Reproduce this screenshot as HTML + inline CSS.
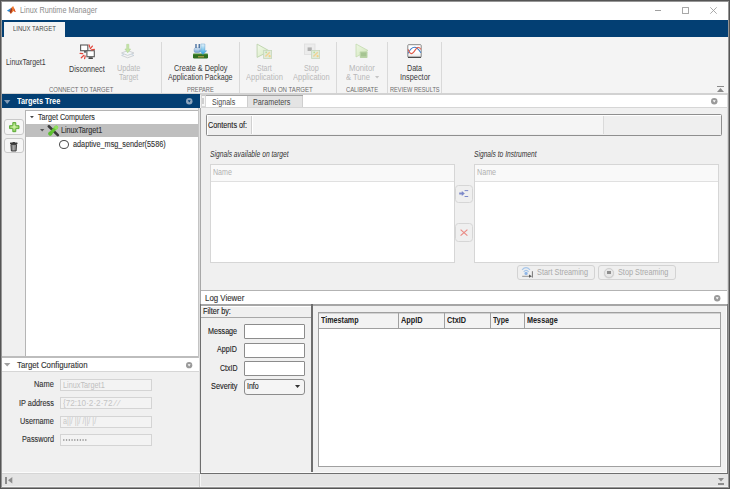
<!DOCTYPE html>
<html><head><meta charset="utf-8">
<style>
*{margin:0;padding:0;box-sizing:border-box}
html,body{width:730px;height:489px;overflow:hidden;background:#f0f0f0}
body{font-family:"Liberation Sans",sans-serif;position:relative}
.a{position:absolute}
svg.a{overflow:visible}
.t{position:absolute;white-space:nowrap;transform-origin:0 0}
</style></head><body>
<div class="a" style="left:0px;top:0px;width:730px;height:20px;background:#fff;"></div>
<svg class="a" style="left:6px;top:5px" width="11" height="10" viewBox="0 0 11 10"><path d="M0.9 5.7 L5.4 2.7 L6 4.6 L3.6 6.9 Z" fill="#2c88d2"/><path d="M5.4 2.7 L7.1 1 L9.7 7 L7.6 6.1 L4.6 9.1 L3.6 6.9 Z" fill="#ee7a2c"/><path d="M5.4 2.7 L6.2 4.4 L5.2 8.4 L3.6 6.9 Z" fill="#9a3420"/><path d="M7.1 1 L9.7 7 L8.3 6.4 L7.6 2.4 Z" fill="#d8432a"/></svg>
<div class="t" style="left:19.90px;top:0.00px;font-size:8.696px;line-height:20px;color:#8c8c8c;transform:scaleX(0.8362);-webkit-text-stroke:0">Linux Runtime Manager</div>
<div class="a" style="left:655px;top:10px;width:6px;height:1px;background:#a0a0a0;"></div>
<div class="a" style="left:682px;top:7px;width:7px;height:7px;border:1px solid #a8a8a8;border-radius:0.5px"></div>
<svg class="a" style="left:710px;top:7px" width="7" height="7" viewBox="0 0 7 7"><path d="M0.3 0.3L6.7 6.7M6.7 0.3L0.3 6.7" stroke="#a0a0a0" stroke-width="0.9"/></svg>
<div class="a" style="left:0px;top:20px;width:730px;height:17px;background:#033f73;"></div>
<div class="a" style="left:4px;top:22px;width:61px;height:15px;background:#f4f4f4;"></div>
<div class="t" style="left:12.80px;top:19.00px;font-size:7.246px;line-height:20px;color:#474747;transform:scaleX(0.8237);-webkit-text-stroke:0.12px #474747;-webkit-text-stroke:0">LINUX TARGET</div>
<div class="a" style="left:0px;top:37px;width:730px;height:56px;background:#f4f4f4;"></div>
<div class="a" style="left:0px;top:93px;width:730px;height:2px;background:#d2d2d2;"></div>
<div class="t" style="left:5.80px;top:52.00px;font-size:8.841px;line-height:20px;color:#3a3a3a;transform:scaleX(0.7843);-webkit-text-stroke:0.12px #3a3a3a;-webkit-text-stroke:0">LinuxTarget1</div>
<svg class="a" style="left:79px;top:44px" width="17" height="16" viewBox="0 0 17 16"><rect x="1.6" y="1" width="7.2" height="5.7" fill="#fff" stroke="#5a5a5a" stroke-width="1.1"/><path d="M5 7.2H7.2V8.6H5Z" fill="#444"/><rect x="7.9" y="6.7" width="7.4" height="6" fill="#fff" stroke="#5a5a5a" stroke-width="1.1"/><path d="M9.8 13.3H13.6L14 15H9.4Z" fill="#444"/><path d="M10.1 0.9L10.7 3.1M13.4 2.1L11.3 4.6M15.4 5.4L12.5 5.8M1.1 9.3L3.7 9.7M2.3 13.8L5 11.3M5.6 14.6L6.2 12.1" stroke="#e2473c" stroke-width="1.25" stroke-linecap="round"/></svg>
<div class="t" style="left:69.30px;top:59.00px;font-size:9.130px;line-height:20px;color:#3a3a3a;transform:scaleX(0.7904);-webkit-text-stroke:0.12px #3a3a3a;-webkit-text-stroke:0">Disconnect</div>
<svg class="a" style="left:120px;top:44px" width="16" height="15" viewBox="0 0 16 15"><path d="M1.5 9 L7.7 6.6 L14 9 L7.7 11.4 Z" fill="#f2f5f8" stroke="#c4c8cc" stroke-width="0.8"/><path d="M1.5 11.4 L7.7 13.8 L14 11.4" fill="none" stroke="#c4c8cc" stroke-width="0.8"/><path d="M4 10.4L1.8 11.3M11.5 10.4L13.7 11.3" stroke="#b8cde0" stroke-width="0.8"/><path d="M6.7 0.3 H8.8 V5 H10.6 L7.75 8.8 L4.9 5 H6.7 Z" fill="#c6e4a8" stroke="#a9d08a" stroke-width="0.5"/></svg>
<div class="t" style="left:116.60px;top:58.00px;font-size:8.300px;line-height:20px;color:#b9b9b9;transform:scaleX(0.8742);">Update</div>
<div class="t" style="left:118.60px;top:67.00px;font-size:8.300px;line-height:20px;color:#b9b9b9;transform:scaleX(0.8367);">Target</div>
<div class="t" style="left:49.00px;top:80.00px;font-size:7.246px;line-height:20px;color:#6c6c6c;transform:scaleX(0.8230);-webkit-text-stroke:0.12px #6c6c6c;-webkit-text-stroke:0">CONNECT TO TARGET</div>
<div class="a" style="left:161px;top:42px;width:1px;height:51px;background:#d9d9d9;"></div>
<svg class="a" style="left:192px;top:43px" width="17" height="17" viewBox="0 0 17 17"><defs><linearGradient id="ag" x1="0" y1="0" x2="0" y2="1"><stop offset="0" stop-color="#e8f4fb"/><stop offset="1" stop-color="#2aa2e0"/></linearGradient><linearGradient id="bg2" x1="0" y1="0" x2="0" y2="1"><stop offset="0" stop-color="#dcecf8"/><stop offset="1" stop-color="#6f9fd0"/></linearGradient></defs><rect x="1" y="10.7" width="15" height="4.8" rx="1.2" fill="#2f6e20"/><rect x="1" y="10.7" width="15" height="0.8" fill="#4f9a38"/><rect x="6" y="13.3" width="6" height="1" fill="#c8a850"/><rect x="2.1" y="4.9" width="6.1" height="4.6" rx="1.5" fill="url(#bg2)" stroke="#5a86b8" stroke-width="0.4"/><path d="M4 1V5M7.2 1V5" stroke="#1d4f8a" stroke-width="1.1"/><path d="M8.8 1 H12.9 V7.8 H14.7 L10.85 11.6 L7.7 7.8 H8.8 Z" fill="url(#ag)" stroke="#4a90c8" stroke-width="0.4"/></svg>
<div class="t" style="left:173.70px;top:58.00px;font-size:8.406px;line-height:20px;color:#3a3a3a;transform:scaleX(0.8675);-webkit-text-stroke:0.12px #3a3a3a;-webkit-text-stroke:0">Create &amp; Deploy</div>
<div class="t" style="left:168.10px;top:67.00px;font-size:8.406px;line-height:20px;color:#3a3a3a;transform:scaleX(0.8494);-webkit-text-stroke:0.12px #3a3a3a;-webkit-text-stroke:0">Application Package</div>
<div class="t" style="left:187.00px;top:80.00px;font-size:7.246px;line-height:20px;color:#6c6c6c;transform:scaleX(0.7831);-webkit-text-stroke:0.12px #6c6c6c;-webkit-text-stroke:0">PREPARE</div>
<div class="a" style="left:239px;top:42px;width:1px;height:51px;background:#d9d9d9;"></div>
<svg class="a" style="left:256px;top:43px" width="17" height="17" viewBox="0 0 17 17"><defs><linearGradient id="tg" x1="0" y1="0" x2="1" y2="1"><stop offset="0" stop-color="#f4faec"/><stop offset="1" stop-color="#d2e8bc"/></linearGradient></defs><path d="M1.1 1.1 L13.5 8 L1.1 14.4 Z" fill="url(#tg)" stroke="#bcd3ac" stroke-width="0.9" stroke-linejoin="round"/><rect x="7.6" y="7.4" width="8" height="8" fill="#e0ebd9" stroke="#c6d6bc" stroke-width="0.8"/><path d="M9.4 13.6 L13.8 9.2" stroke="#f2d294" stroke-width="1.4"/><circle cx="10.2" cy="9.4" r="0.8" fill="#b6de92"/><circle cx="13.6" cy="13.2" r="1.1" fill="#f4d084"/></svg>
<div class="t" style="left:257.10px;top:58.00px;font-size:8.300px;line-height:20px;color:#b9b9b9;transform:scaleX(0.8386);">Start</div>
<div class="t" style="left:246.20px;top:67.00px;font-size:8.300px;line-height:20px;color:#b9b9b9;transform:scaleX(0.9112);">Application</div>
<svg class="a" style="left:304px;top:43px" width="17" height="17" viewBox="0 0 17 17"><rect x="0.5" y="1" width="10.5" height="10.5" fill="#ececec" stroke="#dedede" stroke-width="0.8"/><rect x="3.6" y="4.4" width="4.2" height="3.6" fill="#b0b0b0"/><rect x="7.6" y="7.4" width="8" height="8" fill="#e0ebd9" stroke="#c6d6bc" stroke-width="0.8"/><path d="M9.4 13.6 L13.8 9.2" stroke="#f2d294" stroke-width="1.4"/><circle cx="10.2" cy="9.4" r="0.8" fill="#b6de92"/><circle cx="13.6" cy="13.2" r="1.1" fill="#f4d084"/></svg>
<div class="t" style="left:304.40px;top:58.00px;font-size:8.300px;line-height:20px;color:#b9b9b9;transform:scaleX(0.8669);">Stop</div>
<div class="t" style="left:293.40px;top:67.00px;font-size:8.300px;line-height:20px;color:#b9b9b9;transform:scaleX(0.9039);">Application</div>
<div class="t" style="left:263.00px;top:80.00px;font-size:7.246px;line-height:20px;color:#6c6c6c;transform:scaleX(0.8412);-webkit-text-stroke:0.12px #6c6c6c;-webkit-text-stroke:0">RUN ON TARGET</div>
<div class="a" style="left:336px;top:42px;width:1px;height:51px;background:#d9d9d9;"></div>
<svg class="a" style="left:355px;top:43px" width="15" height="16" viewBox="0 0 15 16"><defs><linearGradient id="mg" x1="0" y1="0" x2="1" y2="1"><stop offset="0" stop-color="#eef7e4"/><stop offset="1" stop-color="#cfe5b8"/></linearGradient></defs><path d="M1 1 L13 7.5 L1 14 Z" fill="url(#mg)" stroke="#c4dab0" stroke-width="0.8" stroke-linejoin="round"/><rect x="4.8" y="8.4" width="7.7" height="6.7" rx="0.8" fill="#b9d3a6"/><rect x="6" y="9.6" width="5.3" height="3.6" fill="#a6c492"/></svg>
<div class="t" style="left:348.90px;top:58.00px;font-size:8.300px;line-height:20px;color:#b9b9b9;transform:scaleX(0.9357);">Monitor</div>
<div class="t" style="left:346.00px;top:67.00px;font-size:8.300px;line-height:20px;color:#b9b9b9;transform:scaleX(0.9087);">&amp; Tune</div>
<svg class="a" style="left:374.5px;top:76.3px" width="4.2" height="2.6" viewBox="0 0 4.2 2.6"><path d="M0 0H4.2L2.1 2.6Z" fill="#c4c4c4"/></svg>
<div class="t" style="left:346.00px;top:80.00px;font-size:7.246px;line-height:20px;color:#6c6c6c;transform:scaleX(0.8079);-webkit-text-stroke:0.12px #6c6c6c;-webkit-text-stroke:0">CALIBRATE</div>
<div class="a" style="left:387px;top:42px;width:1px;height:51px;background:#d9d9d9;"></div>
<svg class="a" style="left:407px;top:43px" width="15" height="16" viewBox="0 0 15 16"><defs><linearGradient id="dg" x1="0" y1="0" x2="0" y2="1"><stop offset="0.6" stop-color="#fff"/><stop offset="1" stop-color="#e4e4e4"/></linearGradient></defs><rect x="0.8" y="1.7" width="13.4" height="12.8" rx="0.8" fill="url(#dg)" stroke="#7a7a7a" stroke-width="0.9"/><path d="M1 14.3H14" stroke="#444" stroke-width="1.2"/><path d="M1.2 10.4 C3 6, 5 4.2, 7.7 4.2 S12 7, 13.8 9.7" fill="none" stroke="#3a7cc8" stroke-width="1.1"/><path d="M1.2 6.4 C2 9, 3 10.6, 4.4 10.6 C7 10.6, 9 4.2, 11 4.2 C12.5 4.2, 13.5 5.5, 13.8 6.4" fill="none" stroke="#e05a48" stroke-width="1.1"/></svg>
<div class="t" style="left:406.90px;top:58.00px;font-size:8.406px;line-height:20px;color:#3a3a3a;transform:scaleX(0.8502);-webkit-text-stroke:0.12px #3a3a3a;-webkit-text-stroke:0">Data</div>
<div class="t" style="left:399.70px;top:67.00px;font-size:8.406px;line-height:20px;color:#3a3a3a;transform:scaleX(0.8735);-webkit-text-stroke:0.12px #3a3a3a;-webkit-text-stroke:0">Inspector</div>
<div class="t" style="left:389.60px;top:80.00px;font-size:7.246px;line-height:20px;color:#6c6c6c;transform:scaleX(0.7829);-webkit-text-stroke:0.12px #6c6c6c;-webkit-text-stroke:0">REVIEW RESULTS</div>
<div class="a" style="left:441px;top:42px;width:1px;height:51px;background:#d9d9d9;"></div>
<div class="a" style="left:717px;top:86px;width:7px;height:1px;background:#8a8a8a;"></div>
<svg class="a" style="left:717px;top:88px" width="7" height="4" viewBox="0 0 7 4"><path d="M0 4H7L3.5 0Z" fill="#8a8a8a"/></svg>
<div class="a" style="left:0px;top:95px;width:200px;height:379px;background:#f0f0f0;"></div>
<div class="a" style="left:2px;top:94px;width:198px;height:14px;background:#033f73;"></div>
<svg class="a" style="left:4.4px;top:99.6px" width="6.4" height="3.9" viewBox="0 0 6.4 3.9"><path d="M0 0H6.4L3.2 3.9Z" fill="#7f9ab6"/></svg>
<div class="t" style="left:17.30px;top:91.00px;font-size:8.406px;line-height:20px;color:#fff;transform:scaleX(0.8771);font-weight:bold;">Targets Tree</div>
<svg class="a" style="left:185.5px;top:98px" width="6.5" height="6.5" viewBox="0 0 6.5 6.5"><circle cx="3.25" cy="3.25" r="3.25" fill="#8ea6be"/><path d="M1.7550000000000001 2.34H4.745L3.25 4.55Z" fill="#033f73"/></svg>
<div class="a" style="left:25px;top:110px;width:174px;height:248px;background:#fff;border:1px solid #b5b5b5"></div>
<svg class="a" style="left:29.9px;top:115.9px" width="3.9" height="2.3" viewBox="0 0 3.9 2.3"><path d="M0 0H3.9L1.95 2.3Z" fill="#444"/></svg>
<div class="t" style="left:38.20px;top:107.00px;font-size:8.300px;line-height:20px;color:#333;transform:scaleX(0.8625);-webkit-text-stroke:0.12px #333;">Target Computers</div>
<div class="a" style="left:26px;top:124px;width:172px;height:13px;background:#bfbfbf;"></div>
<svg class="a" style="left:40.3px;top:129.4px" width="4.4" height="2.4" viewBox="0 0 4.4 2.4"><path d="M0 0H4.4L2.2 2.4Z" fill="#555"/></svg>
<svg class="a" style="left:48px;top:125px" width="11" height="11" viewBox="0 0 11 11"><path d="M0.8 1.3 L9.8 10.1" stroke="#3a3a3a" stroke-width="2.6" stroke-linecap="round"/><path d="M2 8.8 L8.3 2.2" stroke="#62c434" stroke-width="3.2" stroke-linecap="round"/><circle cx="8.2" cy="2.6" r="2.1" fill="#8fdf5e"/><circle cx="2.4" cy="8.6" r="2.1" fill="#5cbf30"/></svg>
<div class="t" style="left:61.20px;top:120.00px;font-size:8.300px;line-height:20px;color:#333;transform:scaleX(0.8669);-webkit-text-stroke:0.12px #333;">LinuxTarget1</div>
<div class="a" style="left:59px;top:140px;width:10px;height:9px;border:1.8px solid #4c4c4c;border-radius:50%"></div>
<div class="t" style="left:72.70px;top:134.00px;font-size:8.300px;line-height:20px;color:#333;transform:scaleX(0.8773);-webkit-text-stroke:0.12px #333;">adaptive_msg_sender(5586)</div>
<div class="a" style="left:4px;top:119px;width:20px;height:16px;background:#f6f6f6;border:1px solid #c9c9c9;border-radius:3px"></div>
<svg class="a" style="left:8.6px;top:122.1px" width="10.6" height="10.3" viewBox="0 0 10.6 10.3"><defs><radialGradient id="pg" cx="0.5" cy="0.45" r="0.6"><stop offset="0" stop-color="#d8f5b0"/><stop offset="1" stop-color="#7cc84a"/></radialGradient></defs><path d="M3.8 0.6H6.8V3.7H10V6.6H6.8V9.7H3.8V6.6H0.6V3.7H3.8Z" fill="url(#pg)" stroke="#55a52e" stroke-width="0.9" stroke-linejoin="round"/></svg>
<div class="a" style="left:4px;top:138px;width:20px;height:15px;background:#f6f6f6;border:1px solid #c9c9c9;border-radius:3px"></div>
<svg class="a" style="left:10px;top:141.5px" width="7.5" height="9.5" viewBox="0 0 7.5 9.5"><rect x="0" y="0.6" width="7.5" height="1.3" rx="0.5" fill="#3a3a3a"/><rect x="2.6" y="0" width="2.3" height="1" fill="#3a3a3a"/><path d="M0.9 2.5H6.6L6.1 9H1.4Z" fill="#8c8c8c" stroke="#333" stroke-width="0.9"/><path d="M3.75 3.5V8.2" stroke="#bdbdbd" stroke-width="0.8"/></svg>
<div class="a" style="left:2px;top:356px;width:198px;height:2px;background:#bdbdbd;"></div>
<div class="a" style="left:2px;top:358px;width:198px;height:14px;background:#fff;border-bottom:1px solid #d6d6d6"></div>
<svg class="a" style="left:4.4px;top:363.3px" width="6.4" height="3.6" viewBox="0 0 6.4 3.6"><path d="M0 0H6.4L3.2 3.6Z" fill="#a0a0a0"/></svg>
<div class="t" style="left:17.10px;top:355.00px;font-size:8.551px;line-height:20px;color:#333;transform:scaleX(0.9169);-webkit-text-stroke:0.12px #333;">Target Configuration</div>
<svg class="a" style="left:185.5px;top:362.2px" width="6.3" height="6.3" viewBox="0 0 6.3 6.3"><circle cx="3.15" cy="3.15" r="3.15" fill="#9a9a9a"/><path d="M1.701 2.268H4.599L3.15 4.409999999999999Z" fill="#fff"/></svg>
<div class="t" style="left:34.00px;top:374.00px;font-size:8.300px;line-height:20px;color:#333;transform:scaleX(0.8941);-webkit-text-stroke:0.12px #333;">Name</div>
<div class="a" style="left:60px;top:379px;width:92px;height:12px;background:#f3f3f3;border:1px solid #d4d4d4"></div>
<div class="t" style="left:18.90px;top:393.00px;font-size:8.300px;line-height:20px;color:#333;transform:scaleX(0.8830);-webkit-text-stroke:0.12px #333;">IP address</div>
<div class="a" style="left:60px;top:397px;width:92px;height:12px;background:#f3f3f3;border:1px solid #d4d4d4"></div>
<div class="t" style="left:20.10px;top:411.00px;font-size:8.300px;line-height:20px;color:#333;transform:scaleX(0.8802);-webkit-text-stroke:0.12px #333;">Username</div>
<div class="a" style="left:60px;top:416px;width:92px;height:12px;background:#f3f3f3;border:1px solid #d4d4d4"></div>
<div class="t" style="left:21.70px;top:429.00px;font-size:8.300px;line-height:20px;color:#333;transform:scaleX(0.8808);-webkit-text-stroke:0.12px #333;">Password</div>
<div class="a" style="left:60px;top:434px;width:92px;height:12px;background:#f3f3f3;border:1px solid #d4d4d4"></div>
<div class="t" style="left:62.80px;top:375.00px;font-size:8.300px;line-height:20px;color:#bfbfbf;transform:scaleX(0.8774);">LinuxTarget1</div>
<div class="t" style="left:62.80px;top:393.00px;font-size:8.300px;line-height:20px;color:#c4c4c4;transform:scaleX(0.9835);">{72:10·2·2·72 ⁄ ⁄</div>
<div class="t" style="left:62.80px;top:411.00px;font-size:8.300px;line-height:20px;color:#c8c8c8;transform:scaleX(0.8701);">a||/ ||/ /||/ |/</div>
<svg class="a" style="left:63px;top:439px" width="24" height="2" viewBox="0 0 24 2"><circle cx="0.80" cy="1" r="0.75" fill="#7a7a7a"/><circle cx="3.55" cy="1" r="0.75" fill="#7a7a7a"/><circle cx="6.30" cy="1" r="0.75" fill="#7a7a7a"/><circle cx="9.05" cy="1" r="0.75" fill="#7a7a7a"/><circle cx="11.80" cy="1" r="0.75" fill="#7a7a7a"/><circle cx="14.55" cy="1" r="0.75" fill="#7a7a7a"/><circle cx="17.30" cy="1" r="0.75" fill="#7a7a7a"/><circle cx="20.05" cy="1" r="0.75" fill="#7a7a7a"/><circle cx="22.80" cy="1" r="0.75" fill="#7a7a7a"/></svg>
<div class="a" style="left:198px;top:108px;width:1px;height:250px;background:#c4c4c4;"></div>
<div class="a" style="left:199px;top:108px;width:1px;height:365px;background:#dedede;"></div>
<div class="a" style="left:200px;top:108px;width:1px;height:365px;background:#a8a8a8;"></div>
<div class="a" style="left:201px;top:95px;width:527px;height:13px;background:#fff;"></div>
<div class="a" style="left:206px;top:95px;width:97px;height:1px;background:#a4a4a4;"></div>
<div class="a" style="left:201px;top:107px;width:527px;height:1px;background:#d6d6d6;"></div>
<div class="a" style="left:201px;top:95px;width:5px;height:12px;background:#f6f6f6;border:1px solid #d8d8d8;border-top-color:#c8c8c8"></div>
<div class="a" style="left:202px;top:98px;width:2px;height:6px;background:#cfcfcf;"></div>
<div class="t" style="left:211.70px;top:92.00px;font-size:8.300px;line-height:20px;color:#4a4a4a;transform:scaleX(0.8522);-webkit-text-stroke:0.12px #4a4a4a;-webkit-text-stroke:0">Signals</div>
<div class="a" style="left:247px;top:96px;width:56px;height:11px;background:#e4e4e4;border-left:1px solid #cfcfcf;border-right:1px solid #cfcfcf"></div>
<div class="t" style="left:252.70px;top:92.00px;font-size:8.300px;line-height:20px;color:#4a4a4a;transform:scaleX(0.8694);-webkit-text-stroke:0.12px #4a4a4a;-webkit-text-stroke:0">Parameters</div>
<svg class="a" style="left:711.4px;top:98.2px" width="6.5" height="6.5" viewBox="0 0 6.5 6.5"><circle cx="3.25" cy="3.25" r="3.25" fill="#9a9a9a"/><path d="M1.7550000000000001 2.34H4.745L3.25 4.55Z" fill="#fff"/></svg>
<div class="a" style="left:201px;top:108px;width:526px;height:182px;background:#f0f0f0;"></div>
<div class="a" style="left:206px;top:114px;width:516px;height:22px;background:#efefef;border:1px solid #8f8f8f;border-radius:1.5px;box-shadow:inset 1px 1px 0 #fff"></div>
<div class="t" style="left:207.90px;top:115.00px;font-size:9.130px;line-height:20px;color:#222;transform:scaleX(0.7942);-webkit-text-stroke:0.12px #222;">Contents of:</div>
<div class="a" style="left:251px;top:116px;width:353px;height:18px;background:#f5f5f5;border-left:1px solid #d0d0d0;border-right:1px solid #dadada;box-shadow:inset 1px 0 0 #fff"></div>
<div class="t" style="left:209.90px;top:144.00px;font-size:8.300px;line-height:20px;color:#333;transform:scaleX(0.8080);font-style:italic;-webkit-text-stroke:0.12px #333;-webkit-text-stroke:0">Signals available on target</div>
<div class="t" style="left:474.30px;top:144.00px;font-size:8.300px;line-height:20px;color:#333;transform:scaleX(0.8037);font-style:italic;-webkit-text-stroke:0.12px #333;-webkit-text-stroke:0">Signals to Instrument</div>
<div class="a" style="left:210px;top:164px;width:245px;height:99px;background:#fff;border:1px solid #d6d6d6"></div>
<div class="a" style="left:211px;top:165px;width:243px;height:17px;background:#f9f9f9;border-bottom:1px solid #e0e0e0"></div>
<div class="t" style="left:212.60px;top:162.00px;font-size:8.300px;line-height:20px;color:#b0b0b0;transform:scaleX(0.8535);">Name</div>
<div class="a" style="left:474px;top:164px;width:245px;height:99px;background:#fff;border:1px solid #d6d6d6"></div>
<div class="a" style="left:475px;top:165px;width:243px;height:17px;background:#f9f9f9;border-bottom:1px solid #e0e0e0"></div>
<div class="t" style="left:476.80px;top:162.00px;font-size:8.300px;line-height:20px;color:#b0b0b0;transform:scaleX(0.8625);">Name</div>
<div class="a" style="left:455px;top:185px;width:18px;height:18px;background:#efefef;border:1px solid #d6d6d6;border-radius:3.5px"></div>
<svg class="a" style="left:458px;top:189px" width="12" height="9" viewBox="0 0 12 9"><path d="M1.2 4.5H4.5" stroke="#7d89c9" stroke-width="2"/><path d="M3.8 2L6.8 4.5L3.8 7Z" fill="#7d89c9"/><path d="M6.6 1.6H10.2M6.6 7.5H10.2" stroke="#7d89c9" stroke-width="1"/></svg>
<div class="a" style="left:455px;top:223px;width:18px;height:19px;background:#efefef;border:1px solid #d6d6d6;border-radius:3.5px"></div>
<svg class="a" style="left:459.8px;top:228.8px" width="8" height="7.2" viewBox="0 0 8 7.2"><path d="M0.6 0.6L7.4 6.6M7.4 0.6L0.6 6.6" stroke="#ea8a84" stroke-width="1.2"/></svg>
<div class="a" style="left:517px;top:265px;width:78px;height:15px;background:#efefef;border:1px solid #d3d3d3;border-radius:3px"></div>
<svg class="a" style="left:521px;top:266px" width="13" height="12" viewBox="0 0 13 12"><path d="M1.1 3.8 Q5 -0.6 9 3.8" stroke="#a6c6ea" stroke-width="1.2" fill="none"/><path d="M2.7 5.8 Q5.1 2.9 7.6 5.8" stroke="#a6c6ea" stroke-width="1.1" fill="none"/><circle cx="5.1" cy="7.4" r="1.6" fill="#8fb6e6"/><path d="M1.2 10.3H8.5" stroke="#8a8a8a" stroke-width="0.9"/><path d="M8 8.5L11 10.3L8 11.8Z" fill="#5a5a5a"/><path d="M11.4 5.2V11.6" stroke="#6a6a6a" stroke-width="0.9"/></svg>
<div class="t" style="left:537.10px;top:262.00px;font-size:8.300px;line-height:20px;color:#a9a9a9;transform:scaleX(0.8845);">Start Streaming</div>
<div class="a" style="left:598px;top:265px;width:78px;height:15px;background:#efefef;border:1px solid #d3d3d3;border-radius:3px"></div>
<div class="a" style="left:604px;top:268px;width:10px;height:10px;background:#e8e8e8;border:1px solid #d0d0d0;border-radius:50%;box-shadow:0 0.5px 1px #ccc"></div>
<div class="a" style="left:607px;top:271px;width:4px;height:3px;background:#8e8e8e;"></div>
<div class="t" style="left:618.30px;top:262.00px;font-size:8.300px;line-height:20px;color:#a9a9a9;transform:scaleX(0.8792);">Stop Streaming</div>
<div class="a" style="left:201px;top:290px;width:526px;height:1px;background:#b3b3b3;"></div>
<div class="a" style="left:201px;top:291px;width:526px;height:13px;background:#fff;"></div>
<div class="t" style="left:205.30px;top:288.00px;font-size:8.986px;line-height:20px;color:#333;transform:scaleX(0.8796);-webkit-text-stroke:0.12px #333;">Log Viewer</div>
<svg class="a" style="left:713.6px;top:294.5px" width="6.4" height="6.4" viewBox="0 0 6.4 6.4"><circle cx="3.2" cy="3.2" r="3.2" fill="#9a9a9a"/><path d="M1.7280000000000002 2.304H4.672L3.2 4.4799999999999995Z" fill="#fff"/></svg>
<div class="a" style="left:200px;top:304px;width:528px;height:2px;background:#a6a6a6;"></div>
<div class="a" style="left:200px;top:306px;width:528px;height:167px;background:#f0f0f0;"></div>
<div class="a" style="left:200px;top:304px;width:1px;height:170px;background:#6e6e6e;"></div>
<div class="a" style="left:311px;top:304px;width:2px;height:170px;background:#6e6e6e;"></div>
<div class="a" style="left:201px;top:306px;width:110px;height:1px;background:#fff;"></div>
<div class="t" style="left:203.00px;top:301.00px;font-size:8.300px;line-height:20px;color:#222;transform:scaleX(0.8767);-webkit-text-stroke:0.12px #222;">Filter by:</div>
<div class="a" style="left:201px;top:317px;width:110px;height:1px;background:#a8a8a8;"></div>
<div class="t" style="left:208.00px;top:321.00px;font-size:8.300px;line-height:20px;color:#222;transform:scaleX(0.8640);-webkit-text-stroke:0.12px #222;">Message</div>
<div class="a" style="left:244px;top:324px;width:61px;height:15px;background:#fff;border:1px solid #8c8c8c;border-radius:1px"></div>
<div class="t" style="left:217.30px;top:339.00px;font-size:8.300px;line-height:20px;color:#222;transform:scaleX(0.8584);-webkit-text-stroke:0.12px #222;">AppID</div>
<div class="a" style="left:244px;top:343px;width:61px;height:15px;background:#fff;border:1px solid #8c8c8c;border-radius:1px"></div>
<div class="t" style="left:219.60px;top:358.00px;font-size:8.300px;line-height:20px;color:#222;transform:scaleX(0.8434);-webkit-text-stroke:0.12px #222;">CtxID</div>
<div class="a" style="left:244px;top:361px;width:61px;height:15px;background:#fff;border:1px solid #8c8c8c;border-radius:1px"></div>
<div class="t" style="left:210.80px;top:376.00px;font-size:8.300px;line-height:20px;color:#222;transform:scaleX(0.8839);-webkit-text-stroke:0.12px #222;">Severity</div>
<div class="a" style="left:244px;top:379px;width:61px;height:16px;background:#f5f5f5;border:1px solid #8c8c8c;border-radius:3px"></div>
<div class="t" style="left:247.00px;top:376.00px;font-size:8.300px;line-height:20px;color:#222;transform:scaleX(0.8451);-webkit-text-stroke:0.12px #222;">Info</div>
<svg class="a" style="left:294.6px;top:385px" width="5.1" height="3" viewBox="0 0 5.1 3"><path d="M0 0H5.1L2.55 3Z" fill="#333"/></svg>
<div class="a" style="left:726px;top:306px;width:1px;height:166px;background:#fafafa;"></div>
<div class="a" style="left:727px;top:304px;width:1px;height:170px;background:#7a7a7a;"></div>
<div class="a" style="left:201px;top:472px;width:526px;height:1px;background:#fafafa;"></div>
<div class="a" style="left:200px;top:473px;width:528px;height:1px;background:#6e6e6e;"></div>
<div class="a" style="left:318px;top:312px;width:403px;height:155px;background:#fff;border:1px solid #a0a0a0"></div>
<div class="a" style="left:319px;top:313px;width:401px;height:16px;background:#f3f3f3;border-bottom:1px solid #a0a0a0;border-top:1px solid #d2d2d2"></div>
<div class="a" style="left:398px;top:313px;width:1px;height:15px;background:#a0a0a0;"></div>
<div class="a" style="left:444px;top:313px;width:1px;height:15px;background:#a0a0a0;"></div>
<div class="a" style="left:490px;top:313px;width:1px;height:15px;background:#a0a0a0;"></div>
<div class="a" style="left:524px;top:313px;width:1px;height:15px;background:#a0a0a0;"></div>
<div class="t" style="left:321.00px;top:310.00px;font-size:8.551px;line-height:20px;color:#222;transform:scaleX(0.8358);font-weight:bold;">Timestamp</div>
<div class="t" style="left:401.00px;top:310.00px;font-size:8.551px;line-height:20px;color:#222;transform:scaleX(0.8581);font-weight:bold;">AppID</div>
<div class="t" style="left:446.70px;top:310.00px;font-size:8.551px;line-height:20px;color:#222;transform:scaleX(0.8555);font-weight:bold;">CtxID</div>
<div class="t" style="left:493.20px;top:310.00px;font-size:8.551px;line-height:20px;color:#222;transform:scaleX(0.8176);font-weight:bold;">Type</div>
<div class="t" style="left:526.80px;top:310.00px;font-size:8.551px;line-height:20px;color:#222;transform:scaleX(0.8498);font-weight:bold;">Message</div>
<div class="a" style="left:2px;top:472px;width:198px;height:1px;background:#fbfbfb;"></div>
<div class="a" style="left:2px;top:473px;width:198px;height:1px;background:#d6d6d6;"></div>
<div class="a" style="left:0px;top:474px;width:730px;height:13px;background:#e4e4e4;"></div>
<div class="a" style="left:2px;top:486px;width:726px;height:1px;background:#f2f2f2;"></div>
<div class="a" style="left:199px;top:474px;width:1px;height:13px;background:#c9c9c9;"></div>
<div class="a" style="left:200px;top:474px;width:1px;height:13px;background:#f6f6f6;"></div>
<div class="a" style="left:5px;top:477px;width:2px;height:7px;background:#8c8c8c;"></div>
<svg class="a" style="left:7.7px;top:477.4px" width="4.3" height="6.4" viewBox="0 0 4.3 6.4"><path d="M4.3 0V6.4L0 3.2Z" fill="#8c8c8c"/></svg>
<svg class="a" style="left:718px;top:477.8px" width="6" height="3.5" viewBox="0 0 6 3.5"><path d="M0 0H6L3 3.5Z" fill="#8c8c8c"/></svg>
<div class="a" style="left:718px;top:483px;width:6px;height:2px;background:#8c8c8c;"></div>
<div class="a" style="left:727px;top:95px;width:1px;height:209px;background:#dcdcdc;"></div>
<div class="a" style="left:0px;top:0px;width:730px;height:489px;border:1px solid #555"></div>
<div class="a" style="left:1px;top:1px;width:728px;height:487px;border:1px solid #969696"></div>
</body></html>
